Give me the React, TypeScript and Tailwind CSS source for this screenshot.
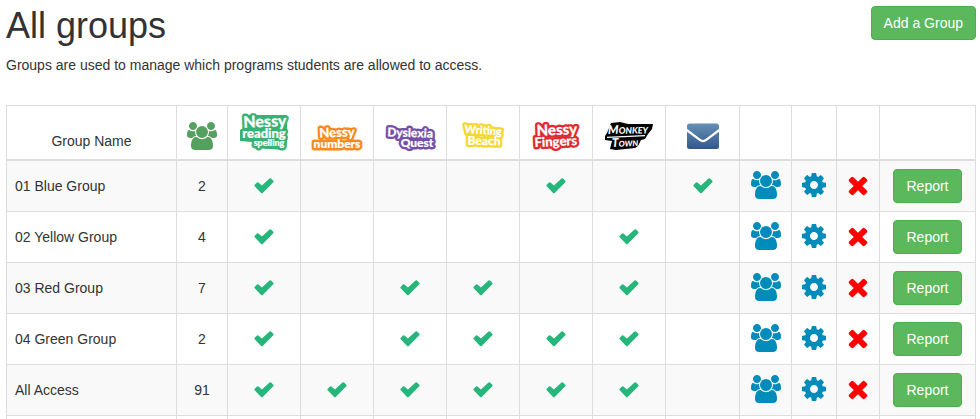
import type { ReactNode } from "react";

const GROUP_PATH =
  "M657 896q-162 5-265 128h-134q-82 0-138-40.5t-56-118.5q0-353 124-353 6 0 43.5 21t97.5 42.5 119 21.5q67 0 133-23-5 37-5 66 0 139 81 256zm1071 637q0 120-73 189.5t-194 69.5h-874q-121 0-194-69.5t-73-189.5q0-53 3.5-103.5t14-109 26.5-108.5 43-97.5 62-81 85.5-53.5 111.5-20q10 0 43 21.5t73 48 107 48 135 21.5 135-21.5 107-48 73-48 43-21.5q61 0 111.5 20t85.5 53.5 62 81 43 97.5 26.5 108.5 14 109 3.5 103.5zm-1024-1277q0 106-75 181t-181 75-181-75-75-181 75-181 181-75 181 75 75 181zm704 384q0 159-112.5 271.5t-271.5 112.5-271.5-112.5-112.5-271.5 112.5-271.5 271.5-112.5 271.5 112.5 112.5 271.5zm576 225q0 78-56 118.5t-138 40.5h-134q-103-123-265-128 81-117 81-256 0-29-5-66 66 23 133 23 59 0 119-21.5t97.5-42.5 43.5-21q124 0 124 353zm-128-609q0 106-75 181t-181 75-181-75-75-181 75-181 181-75 181 75 75 181z";
const COG_PATH =
  "M1152 896q0-106-75-181t-181-75-181 75-75 181 75 181 181 75 181-75 75-181zm512-109v222q0 12-8 23t-20 13l-185 28q-19 54-39 91 35 50 107 138 10 12 10 25t-9 23q-27 37-99 108t-94 71q-12 0-26-9l-138-108q-44 23-91 38-16 136-29 186-7 28-36 28h-222q-14 0-24.5-8.5t-11.5-21.5l-28-184q-49-16-90-37l-141 107q-10 9-25 9-14 0-25-11-126-114-165-168-7-10-7-23 0-12 8-23 15-21 51-66.5t54-70.5q-27-50-41-99l-183-27q-13-2-21-12.5t-8-23.5v-222q0-12 8-23t19-13l186-28q14-46 39-92-40-57-107-138-10-12-10-24 0-10 9-23 26-36 98.5-107.5t94.5-71.5q13 0 26 10l138 107q44-23 91-38 16-136 29-186 7-28 36-28h222q14 0 24.5 8.5t11.5 21.5l28 184q49 16 90 37l142-107q9-9 24-9 13 0 25 10 129 119 165 170 7 8 7 22 0 12-8 23-15 21-51 66.5t-54 70.5q26 50 41 98l183 28q13 2 21 12.5t8 23.5z";
const TIMES_PATH =
  "M1490 1322q0 40-28 68l-136 136q-28 28-68 28t-68-28l-294-294-294 294q-28 28-68 28t-68-28l-136-136q-28-28-28-68t28-68l294-294-294-294q-28-28-28-68t28-68l136-136q28-28 68-28t68 28l294 294 294-294q28-28 68-28t68 28l136 136q28 28 28 68t-28 68l-294 294 294 294q28 28 28 68z";

function GroupIcon({ className }: { className: string }) {
  return (
    <svg viewBox="0 0 2048 1792" fill="currentColor" className={className}>
      <path d={GROUP_PATH} />
    </svg>
  );
}

function Icon({ path, className }: { path: string; className: string }) {
  return (
    <svg viewBox="0 0 1792 1792" fill="currentColor" className={className}>
      <path d={path} />
    </svg>
  );
}

function Check() {
  return (
    <svg viewBox="0 0 20 16" role="img" aria-label="Yes" className="mx-auto block h-4 w-5 text-[#26b67c]">
      <path
        fill="currentColor"
        d="M.7 6.8 3 4.5Q3.7 3.9 4.4 4.5L7.9 7.6 15.5.6Q16.3 0 17 .6L19.3 2.8Q19.9 3.5 19.3 4.2L8.7 14.9Q7.9 15.6 7.1 14.9L.7 8.3Q0 7.6.7 6.8Z"
      />
    </svg>
  );
}

interface Line {
  text: string;
  x: number;
  y: number;
  size: number;
  rotate?: number;
}

// Program logo: white lettering on a thick coloured outline
function Logo({ label, color, lines, backing }: { label: string; color: string; lines: Line[]; backing?: string }) {
  const draw = (outline: boolean) =>
    lines.map((l) => (
      <text
        key={l.text}
        x={l.x}
        y={l.y}
        fontSize={l.size}
        transform={`rotate(${l.rotate ?? 0} ${l.x} ${l.y})`}
        stroke={outline ? color : "#fff"}
        strokeWidth={outline ? 5 : 0.2}
        fill={outline ? color : "#fff"}
      >
        {l.text}
      </text>
    ));
  return (
    <svg
      viewBox="0 0 50 37"
      role="img"
      aria-label={label}
      textAnchor="middle"
      strokeLinejoin="round"
      className="mx-auto block h-[37px] w-[50px] overflow-visible font-['Lato',sans-serif] font-black"
    >
      {backing && <path d={backing} fill={color} />}
      {draw(true)}
      {draw(false)}
    </svg>
  );
}

function MonkeyTownLogo() {
  return (
    <svg
      viewBox="0 0 50 37"
      role="img"
      aria-label="Monkey Town"
      className="mx-auto block h-[37px] w-[50px] overflow-visible font-['Lato',sans-serif] font-black italic"
    >
      <path d="M7 9 16 8 24 10 49 10 48 15 44 20 41 25 37 26 34 32 31 34 12 36 6 35 8 27 1 26 1 22 3 19Z" fill="#000" />
      <path d="M3 23.4 41 21.6" stroke="#fff" strokeWidth="1.3" />
      <g fill="#fff">
        <text x="4" y="20" fontSize="9" transform="rotate(-1 4 20)">
          <tspan fontSize="12">M</tspan>ONKEY
        </text>
        <text x="8" y="33" fontSize="8" transform="rotate(-2 8 33)">
          <tspan fontSize="12">T</tspan>OWN
        </text>
      </g>
    </svg>
  );
}

function EnvelopeIcon() {
  return (
    <svg viewBox="0 0 50 37" role="img" aria-label="Email" className="mx-auto block h-[37px] w-[50px]">
      <defs>
        <linearGradient id="envelope" x1="0" y1="0" x2="0" y2="1">
          <stop offset="0" stopColor="#6690b4" />
          <stop offset="1" stopColor="#32588c" />
        </linearGradient>
      </defs>
      <rect x="9" y="9.5" width="32" height="25.5" rx="2.5" fill="url(#envelope)" />
      <path d="M8 15.5 21.5 25.7Q25 28.5 28.5 25.7L42 15.5" fill="none" stroke="#fff" strokeWidth="2.2" />
    </svg>
  );
}

const programs: { name: string; width: string; logo: ReactNode }[] = [
  {
    name: "Nessy Reading & Spelling",
    width: "w-[73px]",
    logo: (
      <Logo
        label="Nessy Reading & Spelling"
        color="#36b374"
        backing="M5 1 48 1 48 30 46 36 16 34 13 28 1 27 1 16 6 14Z"
        lines={[
          { text: "Nessy", x: 26, y: 13, size: 16, rotate: -2 },
          { text: "reading", x: 25, y: 24, size: 13 },
          { text: "spelling", x: 30, y: 32, size: 9 },
        ]}
      />
    ),
  },
  {
    name: "Nessy Numbers",
    width: "w-[73px]",
    logo: (
      <Logo
        label="Nessy Numbers"
        color="#f68b1f"
        lines={[
          { text: "Nessy", x: 25, y: 23, size: 13, rotate: -2 },
          { text: "numbers", x: 25, y: 34, size: 12 },
        ]}
      />
    ),
  },
  {
    name: "Dyslexia Quest",
    width: "w-[73px]",
    logo: (
      <Logo
        label="Dyslexia Quest"
        color="#7650a8"
        lines={[
          { text: "Dyslexia", x: 25, y: 23, size: 12, rotate: 2 },
          { text: "Quest", x: 32, y: 33, size: 12 },
        ]}
      />
    ),
  },
  {
    name: "Writing Beach",
    width: "w-[73px]",
    logo: (
      <Logo
        label="Writing Beach"
        color="#f5d730"
        lines={[
          { text: "Writing", x: 25, y: 20, size: 11, rotate: 4 },
          { text: "Beach", x: 26, y: 31, size: 12, rotate: 1 },
        ]}
      />
    ),
  },
  {
    name: "Nessy Fingers",
    width: "w-[73px]",
    logo: (
      <Logo
        label="Nessy Fingers"
        color="#e02b30"
        lines={[
          { text: "Nessy", x: 26, y: 21, size: 15, rotate: -2 },
          { text: "Fingers", x: 25, y: 32, size: 13, rotate: -3 },
        ]}
      />
    ),
  },
  { name: "Monkey Town", width: "w-[73px]", logo: <MonkeyTownLogo /> },
  { name: "Email", width: "w-[74px]", logo: <EnvelopeIcon /> },
];

// access holds one flag per entry in programs
const groups = [
  { name: "01 Blue Group", students: 2, access: [1, 0, 0, 0, 1, 0, 1] },
  { name: "02 Yellow Group", students: 4, access: [1, 0, 0, 0, 0, 1, 0] },
  { name: "03 Red Group", students: 7, access: [1, 0, 1, 1, 0, 1, 0] },
  { name: "04 Green Group", students: 2, access: [1, 0, 1, 1, 1, 1, 0] },
  { name: "All Access", students: 91, access: [1, 1, 1, 1, 1, 1, 0] },
];

const cell = "border border-[#ddd] p-2";
const iconCell = "border border-[#ddd] px-0 pt-1.5 pb-2";

function GreenButton({ children }: { children: ReactNode }) {
  return (
    <button
      type="button"
      className="cursor-pointer rounded border border-[#4cae4c] bg-[#5cb85c] px-3 py-1.5 align-middle leading-5 whitespace-nowrap text-white hover:bg-[#449d44]"
    >
      {children}
    </button>
  );
}

function IconButton({ label, className, children }: { label: string; className: string; children: ReactNode }) {
  return (
    <button type="button" aria-label={label} className={`mx-auto block cursor-pointer ${className}`}>
      {children}
    </button>
  );
}

export default function App() {
  return (
    <main className="h-screen overflow-hidden bg-white pt-1.5 pr-1 pl-1.5 font-['Liberation_Sans',Arial,sans-serif] text-sm leading-5 text-[#333]">
      <header className="flex items-start justify-between">
        <h1 className="text-4xl leading-10 font-medium">All groups</h1>
        <GreenButton>Add a Group</GreenButton>
      </header>
      <p className="mt-[9px] mb-[30px]">Groups are used to manage which programs students are allowed to access.</p>

      <table className="w-full table-fixed border-collapse">
        <colgroup>
          <col />
          <col className="w-[51px]" />
          {programs.map((p) => (
            <col key={p.name} className={p.width} />
          ))}
          <col className="w-[52px]" />
          <col className="w-[45px]" />
          <col className="w-[43px]" />
          <col className="w-24" />
        </colgroup>
        <thead>
          <tr className="align-bottom">
            <th scope="col" className={`${cell} border-b-2 text-center font-normal`}>
              Group Name
            </th>
            <th scope="col" aria-label="Students" className={`${cell} border-b-2`}>
              <GroupIcon className="mx-auto mb-px block h-7 w-8 text-[#56a05f]" />
            </th>
            {programs.map((p) => (
              <th key={p.name} scope="col" className={`${cell} border-b-2`}>
                {p.logo}
              </th>
            ))}
            <td className={`${cell} border-b-2`} />
            <td className={`${cell} border-b-2`} />
            <td className={`${cell} border-b-2`} />
            <td className={`${cell} border-b-2`} />
          </tr>
        </thead>
        <tbody>
          {groups.map((g) => (
            <tr key={g.name} className="odd:bg-[#f9f9f9]">
              <td className={cell}>{g.name}</td>
              <td className={`${cell} text-center`}>{g.students}</td>
              {programs.map((p, i) => (
                <td key={p.name} className={cell}>
                  {g.access[i] === 1 && <Check />}
                </td>
              ))}
              <td className={iconCell}>
                <IconButton label={`Students in ${g.name}`} className="text-[#008cba]">
                  <GroupIcon className="h-7 w-8" />
                </IconButton>
              </td>
              <td className={iconCell}>
                <IconButton label={`Settings for ${g.name}`} className="text-[#008cba]">
                  <Icon path={COG_PATH} className="size-7" />
                </IconButton>
              </td>
              <td className={iconCell}>
                <IconButton label={`Delete ${g.name}`} className="text-[#ff0000]">
                  <Icon path={TIMES_PATH} className="size-7" />
                </IconButton>
              </td>
              <td className={`${cell} text-center`}>
                <GreenButton>Report</GreenButton>
              </td>
            </tr>
          ))}
          <tr className="h-[51px]">
            {Array.from({ length: programs.length + 6 }, (_, i) => (
              <td key={i} className={cell} />
            ))}
          </tr>
        </tbody>
      </table>
    </main>
  );
}
